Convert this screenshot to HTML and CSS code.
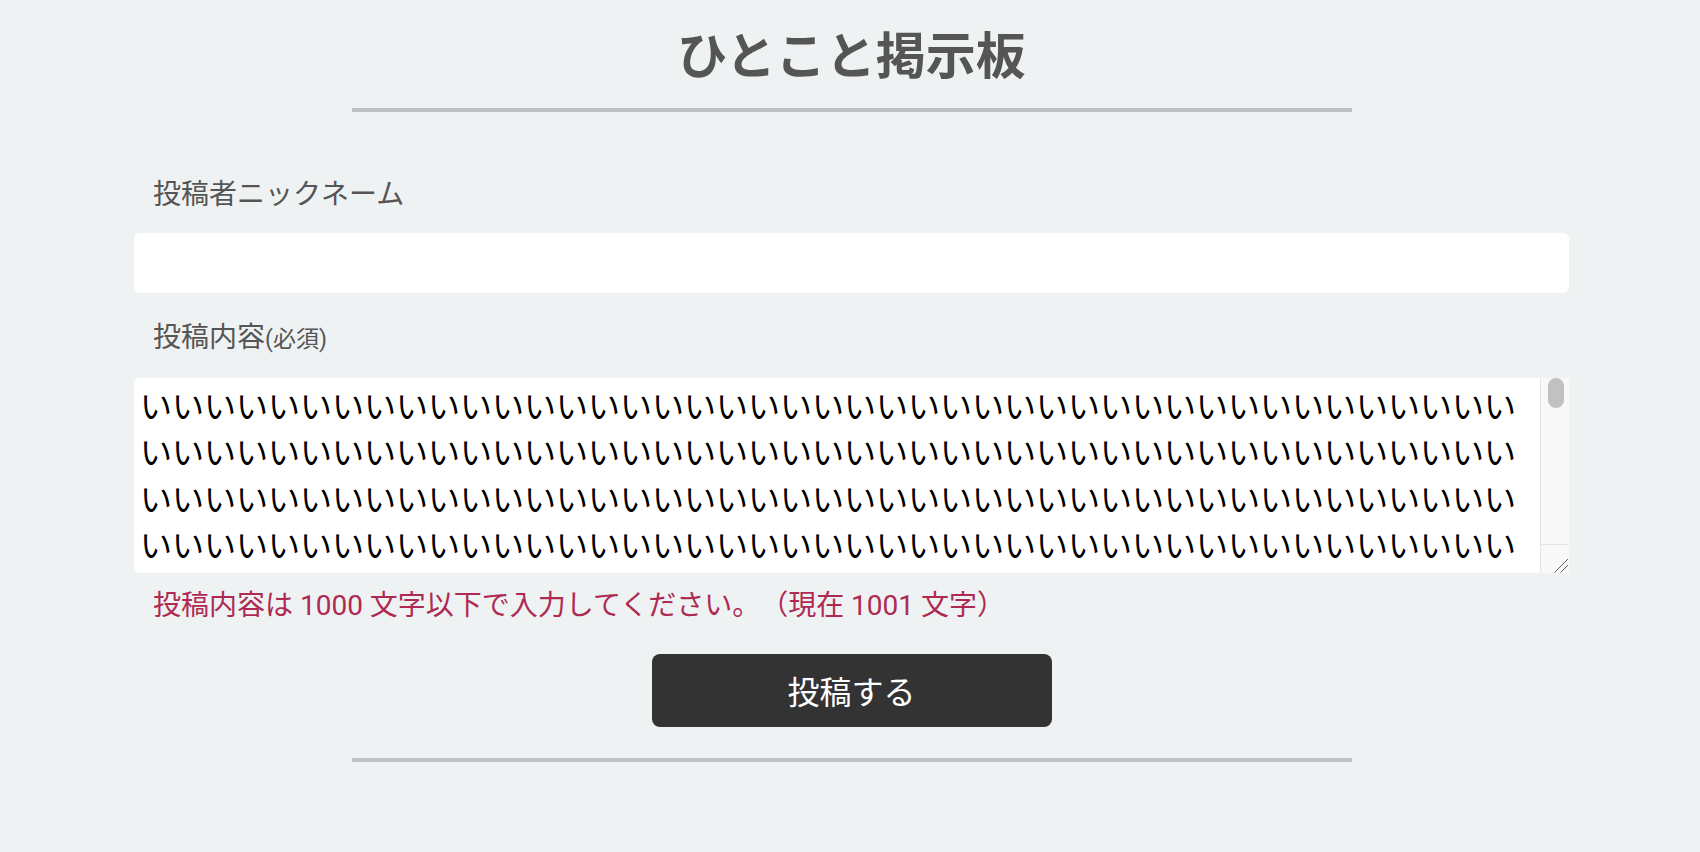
FILE: index.html
```html
<!DOCTYPE html>
<html lang="ja">
<head>
<meta charset="utf-8">
<title>ひとこと掲示板</title>
<link rel="stylesheet" href="styles.css">
</head>
<body>
<div class="page">
  <h1 class="title">ひとこと掲示板</h1>
  <div class="rule"></div>
  <form class="form">
    <label class="label label-name" for="name">投稿者ニックネーム</label>
    <input class="field" id="name" type="text">
    <label class="label label-body" for="body">投稿内容<span class="req">(必須)</span></label>
    <div class="textbox">
      <textarea class="content" id="body">いいいいいいいいいいいいいいいいいいいいいいいいいいいいいいいいいいいいいいいいいいいいいいいいいいいいいいいいいいいいいいいいいいいいいいいいいいいいいいいいいいいいいいいいいいいいいいいいいいいいいいいいいいいいいいいいいいいいいいいいいいいいいいいいいいいいいいいいいいいいいいいいいいいいいいいいいいいいいいいいいいいいいいいいいいいいいいいいいいいいいいいいいいいいいいいいいいいいいいいいいいいいいいいいいいいいいいいいいいいいいいいいいいいいいいいいいいいいいいいいいいいいいいいいいいいいいいいいいいいいいいいいいいいいいいいいいいいいいいいいいいいいいいいいいいいいいいいいいいいいいいいいいいいいいいいいいいいいいいいいいいいいいいいいいいいいいいいいいいいいいいいいいいいいいいいいいいいいいいいいいいいいいいいいいいいいいいいいいいいいいいいいいいいいいいいいいいいいいいいいいいいいいいいいいいいいいいいいいいいいいいいいいいいいいいいいいいいいいいいいいいいいいいいいいいいいいいいいいいいいいいいいいいいいいいいいいいいいいいいいいいいいいいいいいいいいいいいいいいいいいいいいいいいいいいいいいいいいいいいいいいいいいいいいいいいいいいいいいいいいいいいいいいいいいいいいいいいいいいいいいいいいいいいいいいいいいいいいいいいいいいいいいいいいいいいいいいいいいいいいいいいいいいいいいいいいいいいいいいいいいいいいいいいいいいいいいいいいいいいいいいいいいいいいいいいいいいいいいいいいいいいいいいいいいいいいいいいいいいいいいいいいいいいいいいいいいいいいいいいいいいいいいいいいいいいいいいいいいいいいいいいいいいいいいいいいいいいいいいいいいいいいいいいいいいいいいいいいいいいいいいいいいいいいいいいいいいいいいいいいいいいいいいいいいいいいいいいいいいいいいいいいいいいいいいいいいいいいいいいいいいいいいいいいいいいいいいいいいいいいいいいいいいいいいいいいいいいいいいいいいいいいいいいいいいいいいいいいいいいいいいいいいいいいいいいいいいいいいいいいいいいいいいいいいいいいいいいいいいいいいいいいいいいいいいいいいいいいいいいいいいいいいいいいいいいいいいいいいいいいいいいいいいいいいいいいいいいいいいいいいいいいいいいいいいいいいいいいいいいいいいいいいいいいいいいいいいいいいいいいいいいいいいいいいいいいいいいいいいいいいいいいいいいいいいいいいいいいいいいいいいいいいいいいいいいいいいいいいいいいいいいいいいいいいいいいいいいいいいいいいいいいいいいいいいいいいいいいいいいいいいいいいいいいいいいいいいいいいいいいいいいいいいいいいい</textarea>
      <div class="scrollbar" aria-hidden="true">
        <div class="track"><div class="thumb"></div></div>
        <div class="corner">
          <svg class="grip" width="28" height="28" viewBox="0 0 28 28">
            <line x1="13.5" y1="27.5" x2="27" y2="14" stroke="#5f5f5f" stroke-width="1"/>
            <line x1="19.5" y1="27.5" x2="27" y2="20" stroke="#5f5f5f" stroke-width="1"/>
          </svg>
        </div>
      </div>
    </div>
    <p class="error">投稿内容は 1000 文字以下で入力してください。（現在 1001 文字）</p>
    <button class="submit" type="button">投稿する</button>
  </form>
  <div class="rule rule-bottom"></div>
</div>
</body>
</html>
```
FILE: styles.css
```css
html, body {
  margin: 0;
  padding: 0;
  background: #eff2f3;
}

body {
  font-family: Roboto, "Noto Sans CJK JP", sans-serif;
  color: #555;
  text-spacing-trim: space-all;
}

.page {
  padding: 0 131px 0 134px;
}

.title {
  margin: 0;
  padding-top: 17px;
  font-family: "Noto Sans CJK JP", sans-serif;
  font-size: 50px;
  font-weight: 700;
  line-height: 70px;
  text-align: center;
  color: #555;
}

.rule {
  width: 1000px;
  height: 4px;
  margin: 21px auto 0;
  background: #bfc1c2;
}

.form {
  display: flex;
  flex-direction: column;
}

.label {
  display: block;
  padding-left: 19px;
  font-family: "Noto Sans CJK JP", sans-serif;
  font-size: 28px;
  line-height: 40px;
  color: #555;
}

.label-name {
  margin: 60px 0 21px;
}

.label-body {
  margin: 22px 0 23px;
}

.req {
  font-family: Roboto, "Noto Sans CJK JP", sans-serif;
  font-size: 23px;
  line-height: 1;
}

.field {
  display: block;
  box-sizing: border-box;
  width: 100%;
  height: 60px;
  margin: 0;
  padding: 0 8px;
  border: none;
  border-radius: 6px;
  background: #fff;
  font-family: "Noto Sans CJK JP", sans-serif;
  font-size: 28px;
  outline: none;
}

.textbox {
  display: flex;
  height: 195px;
  border-radius: 6px 0 0 6px;
  background: #fff;
  overflow: hidden;
}

.content {
  flex: 1;
  display: block;
  box-sizing: border-box;
  min-width: 0;
  height: 100%;
  margin: 0;
  padding: 3px 6px 7px;
  border: none;
  background: #fff;
  color: #000;
  font-family: "Noto Sans CJK JP", sans-serif;
  font-size: 32px;
  line-height: 46.33px;
  resize: none;
  overflow: hidden;
  outline: none;
}

.scrollbar {
  display: flex;
  flex-direction: column;
  width: 28px;
  border-left: 1px solid #e6e6e6;
  background: #f8f8f8;
}

.track {
  flex: 1;
  padding-left: 7px;
}

.thumb {
  width: 16px;
  height: 30px;
  border-radius: 8px;
  background: #c1c1c1;
}

.corner {
  height: 28px;
  border-top: 1px solid #e2e2e2;
  display: flex;
  align-items: flex-end;
  justify-content: flex-end;
}

.grip {
  display: block;
}

.error {
  margin: 13px 0 0;
  padding-left: 19px;
  font-size: 28px;
  line-height: 40px;
  color: #ae2a52;
}

.submit {
  display: block;
  width: 400px;
  height: 73px;
  margin: 28px auto 0;
  padding: 0;
  border: none;
  border-radius: 8px;
  background: #333;
  color: #fff;
  font-family: "Noto Sans CJK JP", sans-serif;
  font-size: 32px;
  line-height: 73px;
  cursor: pointer;
}

.rule-bottom {
  margin-top: 31px;
}
```
